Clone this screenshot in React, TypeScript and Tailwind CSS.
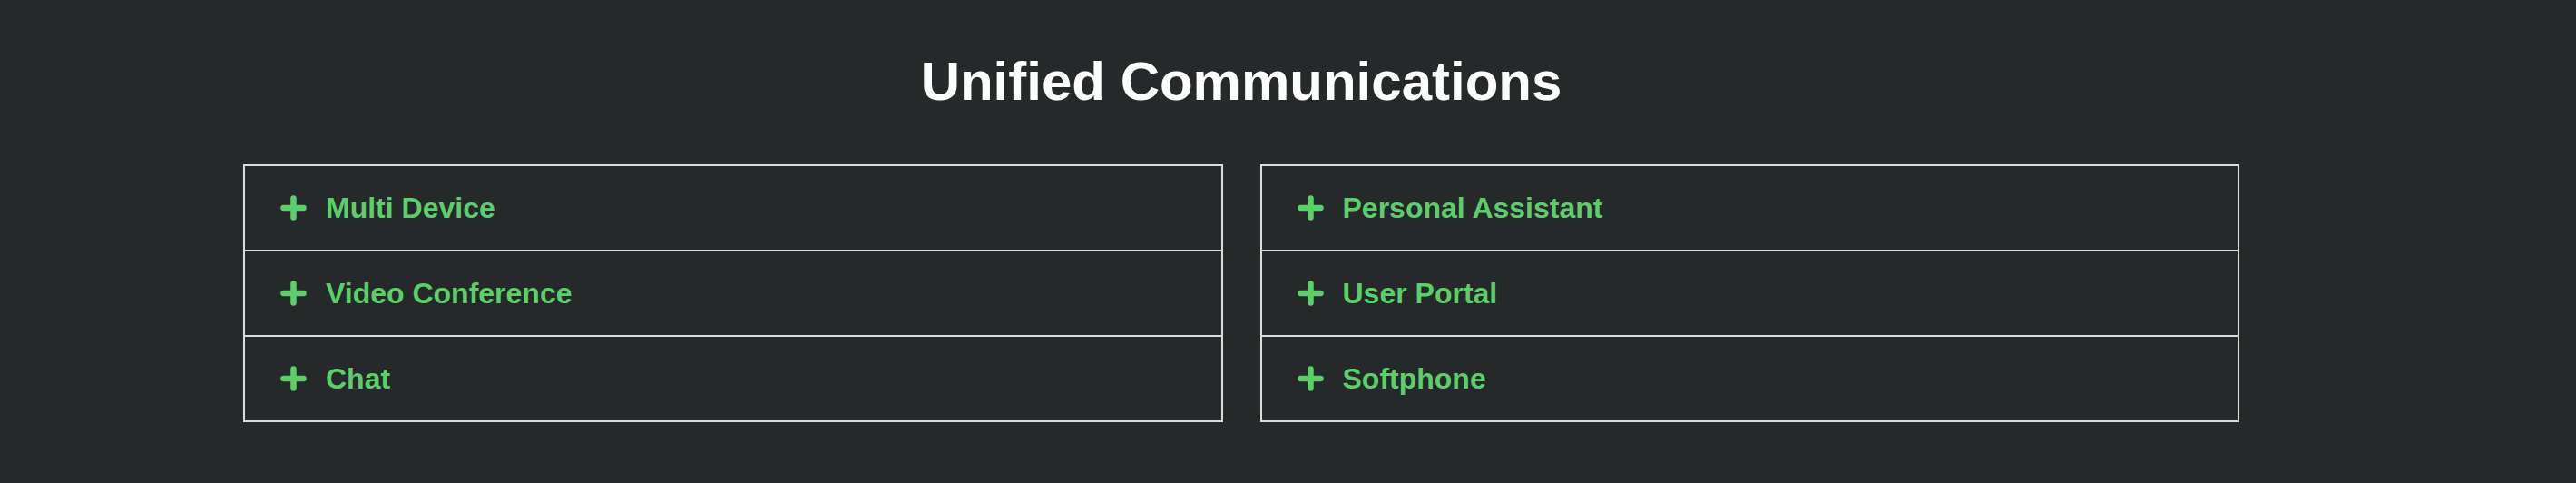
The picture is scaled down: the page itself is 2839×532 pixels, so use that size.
const LEFT = ['Multi Device', 'Video Conference', 'Chat']
const RIGHT = ['Personal Assistant', 'User Portal', 'Softphone']

function PlusIcon() {
  return (
    <svg width="29" height="28" viewBox="0 0 29 28" className="shrink-0" aria-hidden="true">
      <path d="M3.5 14H25.5M14.5 3.5V24.5" stroke="#5ccf6b" strokeWidth="6.5" strokeLinecap="round" fill="none" />
    </svg>
  )
}

function FeatureList({ items }: { items: string[] }) {
  return (
    <div className="flex flex-col border-2 border-[#dcdcdc]">
      {items.map((label, i) => (
        <div
          key={label}
          className={`box-content flex h-[92px] items-center gap-[21px] pl-[39px] ${i > 0 ? 'border-t-2 border-[#dcdcdc]' : ''}`}
        >
          <PlusIcon />
          <span className="text-[32px] font-bold leading-none text-[#5ccf6b]">{label}</span>
        </div>
      ))}
    </div>
  )
}

export default function App() {
  return (
    <div className="min-h-[532px] w-full bg-[#25292a] font-['Liberation_Sans',Arial,sans-serif]">
      <div className="w-[2736px] px-[268px] pt-[60px]">
        <h1 className="text-center text-[60px] font-bold leading-[60px] text-white">Unified Communications</h1>
        <div className="mt-[61px] grid grid-cols-2 gap-[41px]">
          <FeatureList items={LEFT} />
          <FeatureList items={RIGHT} />
        </div>
      </div>
    </div>
  )
}
